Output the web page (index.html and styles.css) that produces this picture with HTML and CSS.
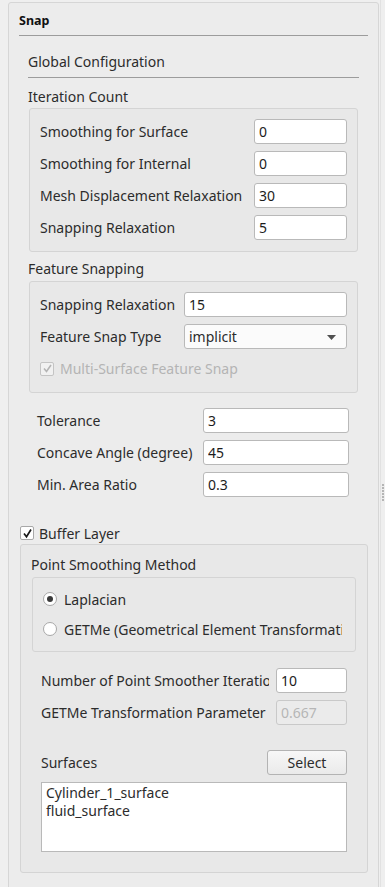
FILE: index.html
```html
<!DOCTYPE html>
<html lang="en">
<head>
    <meta charset="UTF-8">
    <meta name="viewport" content="width=device-width, initial-scale=1.0">
    <title>Snap</title>
    <link rel="stylesheet" href="styles.css">
</head>
<body>
    <div class="panel">
        <div class="panel-title">Snap</div>

        <div class="section">
            <div class="section-head">Global Configuration</div>

            <div class="group-label">Iteration Count</div>
            <div class="group iteration">
                <div class="row">
                    <span class="label">Smoothing for Surface</span>
                    <input class="field" type="text" value="0">
                </div>
                <div class="row">
                    <span class="label">Smoothing for Internal</span>
                    <input class="field" type="text" value="0">
                </div>
                <div class="row">
                    <span class="label">Mesh Displacement Relaxation</span>
                    <input class="field" type="text" value="30">
                </div>
                <div class="row">
                    <span class="label">Snapping Relaxation</span>
                    <input class="field" type="text" value="5">
                </div>
            </div>

            <div class="group-label feature-label">Feature Snapping</div>
            <div class="group feature">
                <div class="row">
                    <span class="label">Snapping Relaxation</span>
                    <input class="field" type="text" value="15">
                </div>
                <div class="row">
                    <span class="label">Feature Snap Type</span>
                    <div class="combo">
                        <span>implicit</span>
                        <svg class="combo-arrow" width="9" height="5" viewBox="0 0 9 5"><path d="M0 0h9L4.5 5z" fill="#505050"/></svg>
                    </div>
                </div>
                <div class="row check-row disabled">
                    <span class="checkbox">
                        <svg width="11" height="11" viewBox="0 0 11 11"><path d="M2 5.5l2.5 3L9 2" fill="none" stroke="#b4b4b4" stroke-width="1.6"/></svg>
                    </span>
                    <span>Multi-Surface Feature Snap</span>
                </div>
            </div>
        </div>

        <div class="tolerance">
            <div class="row">
                <span class="label">Tolerance</span>
                <input class="field" type="text" value="3">
            </div>
            <div class="row">
                <span class="label">Concave Angle (degree)</span>
                <input class="field" type="text" value="45">
            </div>
            <div class="row">
                <span class="label">Min. Area Ratio</span>
                <input class="field" type="text" value="0.3">
            </div>
        </div>

        <div class="buffer-check">
            <span class="checkbox">
                <svg width="11" height="11" viewBox="0 0 11 11"><path d="M2 5.5l2.5 3.2L9 1.5" fill="none" stroke="#1a1a1a" stroke-width="1.7"/></svg>
            </span>
            <span>Buffer Layer</span>
        </div>

        <div class="group buffer">
            <div class="group-label">Point Smoothing Method</div>
            <div class="group radios">
                <div class="radio-row">
                    <span class="radio checked"></span>
                    <span>Laplacian</span>
                </div>
                <div class="radio-row">
                    <span class="radio"></span>
                    <span class="clip">GETMe (Geometrical Element Transformation Method)</span>
                </div>
            </div>

            <div class="smoother">
                <div class="row">
                    <span class="label clip">Number of Point Smoother Iterations</span>
                    <input class="field" type="text" value="10">
                </div>
                <div class="row">
                    <span class="label clip">GETMe Transformation Parameter</span>
                    <input class="field" type="text" value="0.667" disabled>
                </div>
            </div>

            <div class="surfaces-head">
                <span>Surfaces</span>
                <button class="btn">Select</button>
            </div>
            <div class="list">
                <div>Cylinder_1_surface</div>
                <div>fluid_surface</div>
            </div>
        </div>
    </div>

    <div class="splitter">
        <span></span><span></span><span></span><span></span><span></span><span></span>
    </div>
</body>
</html>
```

FILE: styles.css
```css
body {
    margin: 0;
    background: #efefef;
    font-family: 'Noto Sans', 'DejaVu Sans', sans-serif;
    font-size: 14px;
    color: #2c2c2c;
    display: flex;
    height: 887px;
    overflow: hidden;
}
.panel {
    margin: 2px 0 0 8px;
    width: 369px;
    height: 900px;
    background: #ececec;
    border: 1px solid #d6d6d6;
    border-radius: 3px;
    flex-shrink: 0;
}
.panel-title {
    margin: 0 10px;
    padding: 10px 0 6px;
    line-height: 16px;
    font-size: 12.5px;
    font-weight: bold;
    color: #111;
    border-bottom: 1px solid #9c9c9c;
}
.section {
    margin: 0 19px;
}
.section-head {
    margin-top: 18px;
    padding-bottom: 7px;
    line-height: 16px;
    border-bottom: 1px solid #9c9c9c;
}
.group-label {
    margin-top: 11px;
    line-height: 16px;
}
.feature-label {
    margin-top: 9px;
}
.group {
    background: #e8e8e8;
    border: 1px solid #d4d4d4;
    border-radius: 3px;
}
.iteration,
.feature {
    margin: 3px 1px 0;
    padding: 10px 10px 11px 10px;
}
.feature {
    margin-top: 4px;
}
.row {
    display: flex;
    align-items: center;
    height: 25px;
    margin-top: 7px;
}
.row:first-child {
    margin-top: 0;
}
.label {
    flex: 1;
    min-width: 0;
    white-space: nowrap;
}
.clip {
    min-width: 0;
    overflow: hidden;
    white-space: nowrap;
}
.field {
    box-sizing: border-box;
    flex-shrink: 0;
    height: 25px;
    width: 93px;
    padding: 0 4px;
    background: #fff;
    border: 1px solid #b9b9b9;
    border-radius: 3px;
    font: inherit;
    color: #1c1c1c;
    outline: none;
}
.field:disabled {
    background: #ebebeb;
    color: #b6b6b6;
    border-color: #c9c9c9;
}
.feature .field,
.combo {
    width: 163px;
}
.combo {
    box-sizing: border-box;
    height: 25px;
    padding: 0 10px 0 4px;
    display: flex;
    align-items: center;
    justify-content: space-between;
    background: #fbfbfb;
    border: 1px solid #b9b9b9;
    border-radius: 3px;
}
.combo-arrow {
    margin-top: 1px;
}
.check-row {
    gap: 6px;
}
.disabled {
    color: #b4b4b4;
}
.checkbox {
    box-sizing: border-box;
    flex-shrink: 0;
    width: 14px;
    height: 14px;
    background: #fff;
    border: 1px solid #a8a8a8;
    border-radius: 2px;
    display: flex;
    align-items: center;
    justify-content: center;
}
.disabled .checkbox {
    background: #f1f1f1;
    border-color: #c4c4c4;
}
.tolerance {
    margin: 15px 29px 0 28px;
}
.tolerance .field {
    width: 146px;
}
.buffer-check {
    display: flex;
    align-items: center;
    gap: 5px;
    margin: 28px 0 0 11px;
    height: 16px;
}
.buffer {
    margin: 3px 10px 0 11px;
    padding: 12px 10px 20px 10px;
}
.buffer > .group-label {
    margin-top: 0;
}
.radios {
    margin: 4px 1px 0 1px;
    padding: 10px 13px 11px 10px;
}
.radio-row {
    display: flex;
    align-items: center;
    gap: 7px;
    height: 22px;
    white-space: nowrap;
    overflow: hidden;
}
.radio-row + .radio-row {
    margin-top: 8px;
}
.radio {
    box-sizing: border-box;
    flex-shrink: 0;
    width: 14px;
    height: 14px;
    border-radius: 50%;
    background: #fff;
    border: 1px solid #a8a8a8;
    display: flex;
    align-items: center;
    justify-content: center;
}
.radio.checked::after {
    content: "";
    width: 6px;
    height: 6px;
    border-radius: 50%;
    background: #3a3a3a;
}
.smoother {
    margin: 16px 10px 0 10px;
}
.smoother .label {
    margin-right: 7px;
}
.smoother .field {
    width: 71px;
}
.surfaces-head {
    display: flex;
    align-items: center;
    justify-content: space-between;
    margin: 25px 10px 0 10px;
    height: 25px;
}
.btn {
    box-sizing: border-box;
    width: 80px;
    height: 25px;
    background: linear-gradient(#f7f7f7, #eaeaea);
    border: 1px solid #b3b3b3;
    border-radius: 3px;
    font: inherit;
    color: #2c2c2c;
}
.list {
    box-sizing: border-box;
    margin: 7px 10px 0 10px;
    height: 70px;
    padding: 1px 4px;
    background: #fff;
    border: 1px solid #b9b9b9;
    line-height: 18px;
}
.splitter {
    flex: 1;
    margin-left: 1px;
    border-left: 1px solid #e2e2e2;
    display: flex;
    flex-direction: column;
    align-items: center;
    padding-top: 484px;
    gap: 1px;
}
.splitter span {
    width: 2px;
    height: 2px;
    background: #b5b5b5;
}
```
